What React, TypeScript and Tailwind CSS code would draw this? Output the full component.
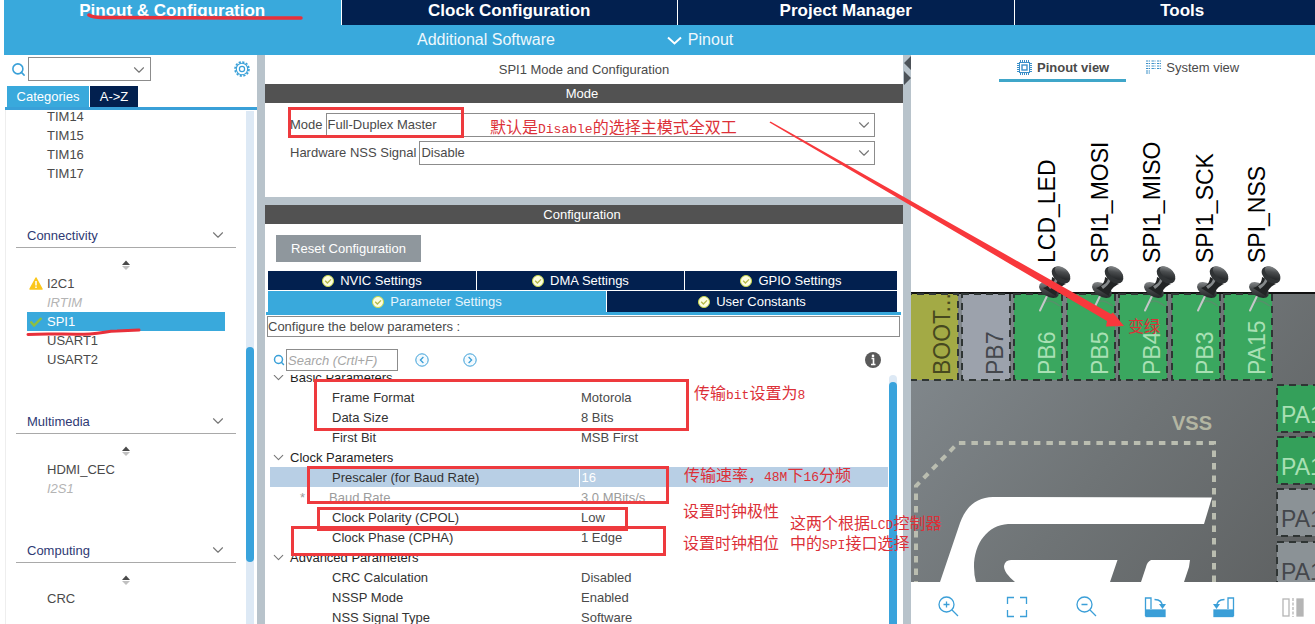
import { Fragment, ReactNode } from "react";
import clsx from "clsx";
import { ChevronDown, Search } from "lucide-react";

type Peripheral = {
  name: string;
  state?: "warning" | "active" | "disabled";
};

type Category = {
  name: string;
  items: Peripheral[];
};

const timers: Peripheral[] = [
  { name: "TIM14" },
  { name: "TIM15" },
  { name: "TIM16" },
  { name: "TIM17" },
];

const categories: Category[] = [
  {
    name: "Connectivity",
    items: [
      { name: "I2C1", state: "warning" },
      { name: "IRTIM", state: "disabled" },
      { name: "SPI1", state: "active" },
      { name: "USART1" },
      { name: "USART2" },
    ],
  },
  {
    name: "Multimedia",
    items: [{ name: "HDMI_CEC" }, { name: "I2S1", state: "disabled" }],
  },
  { name: "Computing", items: [{ name: "CRC" }] },
];

type Param = {
  name: string;
  value: string;
  state?: "selected" | "readonly";
};

const paramGroups: { name: string; params: Param[] }[] = [
  {
    name: "Basic Parameters",
    params: [
      { name: "Frame Format", value: "Motorola" },
      { name: "Data Size", value: "8 Bits" },
      { name: "First Bit", value: "MSB First" },
    ],
  },
  {
    name: "Clock Parameters",
    params: [
      { name: "Prescaler (for Baud Rate)", value: "16", state: "selected" },
      { name: "Baud Rate", value: "3.0 MBits/s", state: "readonly" },
      { name: "Clock Polarity (CPOL)", value: "Low" },
      { name: "Clock Phase (CPHA)", value: "1 Edge" },
    ],
  },
  {
    name: "Advanced Parameters",
    params: [
      { name: "CRC Calculation", value: "Disabled" },
      { name: "NSSP Mode", value: "Enabled" },
      { name: "NSS Signal Type", value: "Software" },
    ],
  },
];

function Header() {
  const tabs = ["Clock Configuration", "Project Manager", "Tools"];
  return (
    <header className="shrink-0 overflow-hidden pl-1">
      <nav className="grid w-[calc(100%+35px)] grid-cols-4 bg-[#39a9dc] text-[17px] leading-[21px] font-bold text-white">
        <button type="button" className="h-[25px] pb-1">
          Pinout &amp; Configuration
        </button>
        {tabs.map(tab => (
          <button
            key={tab}
            type="button"
            className="h-[25px] border-l border-white bg-[#02204f] pb-1"
          >
            {tab}
          </button>
        ))}
      </nav>
      <div className="flex h-[30px] items-center gap-[112px] bg-[#39a9dc] pl-[413px] text-base text-[#eef8fd]">
        <button type="button">Additional Software</button>
        <button type="button" className="flex items-center gap-1.5">
          <svg width="15" height="9" viewBox="0 0 15 9" fill="none">
            <path d="M1 1.5 7.5 7.5 14 1.5" stroke="white" strokeWidth="2" />
          </svg>
          Pinout
        </button>
      </div>
    </header>
  );
}

function PeripheralIcon({ state }: { state?: Peripheral["state"] }) {
  if (state === "warning") {
    return (
      <svg width="14" height="13" viewBox="0 0 14 13">
        <path
          d="M7 1 13 12H1Z"
          fill="#fbc71c"
          stroke="#fbc71c"
          strokeWidth="1.5"
          strokeLinejoin="round"
        />
        <path d="M7 4v4.5M7 9.5v1.6" stroke="white" strokeWidth="1.5" />
      </svg>
    );
  }
  if (state === "active") {
    return (
      <svg width="14" height="12" viewBox="0 0 14 12" fill="none">
        <path d="M1.5 5.5 5 9.5 12.5 2" stroke="#8fbf3f" strokeWidth="2.4" />
      </svg>
    );
  }
  return null;
}

function PeripheralList({ items }: { items: Peripheral[] }) {
  return (
    <ul className="mr-[21px] ml-[21px]">
      {items.map(item => (
        <li key={item.name}>
          <button
            type="button"
            className={clsx(
              "flex h-[19px] w-full items-center text-left",
              item.state === "active" && "bg-[#39a9dc] text-white",
              item.state === "disabled" && "text-[#b4b4b4] italic"
            )}
          >
            <span className="flex w-5 pl-0.5">
              <PeripheralIcon state={item.state} />
            </span>
            {item.name}
          </button>
        </li>
      ))}
    </ul>
  );
}

function Sidebar() {
  return (
    <aside className="flex w-[257px] shrink-0 flex-col">
      <div className="flex items-center pt-0.5 pr-[7px] pl-[11px]">
        <Search className="size-[15px] text-[#39a0d8]" strokeWidth={2.5} />
        <div className="relative ml-0.5 w-[123px]">
          <select
            aria-label="Search peripheral"
            className="block h-6 w-full appearance-none border border-[#8c8c8c] bg-white"
          />
          <ChevronDown className="pointer-events-none absolute top-1 right-[3px] size-[18px] text-[#777]" strokeWidth={1.5} />
        </div>
        <button type="button" aria-label="Settings" className="ml-auto">
          <svg width="16" height="16" viewBox="0 0 16 16" fill="none" stroke="#39a0d8">
            <circle cx="8" cy="8" r="7" strokeWidth="1.6" strokeDasharray="2.2 1.47" />
            <circle cx="8" cy="8" r="5.7" strokeWidth="1.1" />
            <circle cx="8" cy="8" r="2.6" strokeWidth="1.2" />
          </svg>
        </button>
      </div>
      <div className="mt-[5px] ml-[5px] flex gap-px border-b-[3px] border-[#39a0d8] pl-0.5 text-white">
        <button type="button" className="h-[21px] w-[82px] bg-[#39a9dc]">
          Categories
        </button>
        <button type="button" className="h-[21px] w-12 bg-[#02204f]">
          A-&gt;Z
        </button>
      </div>
      <div className="ml-[5px] flex min-h-0 flex-1 overflow-hidden border-l border-[#eeeeee]">
        <div className="-mt-[3px] min-w-0 flex-1">
          <PeripheralList items={timers} />
          {categories.map(category => (
            <section key={category.name} className="pt-10">
              <button
                type="button"
                className="mr-2.5 ml-2.5 flex h-[25px] w-[220px] items-center justify-between border-b border-[#a9a9a9] pr-[9px] pl-[11px] text-[#2f3a74]"
              >
                {category.name}
                <ChevronDown className="size-[18px] text-[#777]" strokeWidth={1.5} />
              </button>
              <div className="flex h-[26px] justify-center pt-3">
                <svg width="10" height="11" viewBox="0 0 10 11">
                  <path d="M5 0.5 9 5H1Z" fill="#4a4a4a" />
                  <path d="M5 10 9 6H1Z" fill="#c0c0c0" />
                </svg>
              </div>
              <PeripheralList items={category.items} />
            </section>
          ))}
        </div>
        <div className="mt-px mr-[3px] flex w-2 flex-col bg-[#dde9f5]">
          <div className="h-[46%]" />
          <div className="h-[42%] rounded-full bg-[#39a3dc]" />
        </div>
      </div>
    </aside>
  );
}

function TitleBar({ children }: { children: ReactNode }) {
  return (
    <div className="h-[19px] shrink-0 bg-[#525252] pr-1 text-center leading-[19px] text-white">
      {children}
    </div>
  );
}

function ModeField({ id, label, value }: { id: string; label: string; value: string }) {
  return (
    <div className="flex items-center gap-[3px]">
      <label htmlFor={id} className="pb-0.5">
        {label}
      </label>
      <div className="relative flex-1">
        <select
          id={id}
          defaultValue={value}
          className="block h-6 w-full appearance-none border border-[#8c8c8c] bg-white pb-0.5 pl-px"
        >
          <option>{value}</option>
        </select>
        <ChevronDown className="pointer-events-none absolute top-[3px] right-0.5 size-[18px] text-[#777]" strokeWidth={1.5} />
      </div>
    </div>
  );
}

function SettingsTab({ label, active }: { label: string; active?: boolean }) {
  return (
    <button
      type="button"
      className={clsx(
        "flex h-full items-center justify-center gap-1.5",
        active ? "bg-[#39a9dc] text-[#e6f5fc]" : "bg-[#02204f] text-white"
      )}
    >
      <svg width="12" height="12" viewBox="0 0 12 12" fill="none">
        <circle cx="6" cy="6" r="5.5" fill="#fdfde0" stroke="#c9d84a" />
        <path d="M3.2 5.8 5.4 8 9 4.4" stroke="#b3b848" strokeWidth="1.3" />
      </svg>
      {label}
    </button>
  );
}

function CircleArrow({ label, d }: { label: string; d: string }) {
  return (
    <button type="button" aria-label={label}>
      <svg width="14" height="14" viewBox="0 0 14 14" fill="none" stroke="#3b9fd8">
        <circle cx="7" cy="7" r="6.2" fill="#f3fafe" />
        <path d={d} strokeWidth="1.3" />
      </svg>
    </button>
  );
}

function ParameterTable() {
  return (
    <table className="-mt-2 w-full table-fixed border-collapse self-start">
      <tbody>
        {paramGroups.map(group => (
          <Fragment key={group.name}>
            <tr className="h-5 text-[#1f1f1f]">
              <th colSpan={2} className="p-0 text-left font-normal">
                <div className="flex items-center gap-[3px]">
                  <ChevronDown className="size-[17px] text-[#777]" strokeWidth={1.5} />
                  {group.name}
                </div>
              </th>
            </tr>
            {group.params.map(param => (
              <tr
                key={param.name}
                className={clsx(
                  "h-5",
                  param.state === "selected" && "bg-[#b8cfe5]",
                  param.state === "readonly" ? "text-[#9c9c9c]" : "text-[#333]"
                )}
              >
                <td className="w-1/2 p-0">
                  {param.state === "readonly" ? (
                    <div className="flex pl-[30px]">
                      <span className="w-[29px]">*</span>
                      {param.name}
                    </div>
                  ) : (
                    <div className="pl-[62px]">{param.name}</div>
                  )}
                </td>
                <td
                  className={clsx(
                    "py-0 pr-0",
                    param.state === "selected"
                      ? "border-l border-white pl-0.5 text-white"
                      : "pl-0.5",
                    !param.state && "text-[#4a4a4a]"
                  )}
                >
                  {param.value}
                </td>
              </tr>
            ))}
          </Fragment>
        ))}
      </tbody>
    </table>
  );
}

function ConfigurationPanel() {
  return (
    <main className="flex min-w-0 flex-[638] flex-col">
      <h1 className="h-[29px] shrink-0 text-center leading-[29px]">
        SPI1 Mode and Configuration
      </h1>
      <TitleBar>Mode</TitleBar>
      <div className="flex h-[94px] shrink-0 flex-col gap-1 pt-[10px] pr-7 pl-[25px]">
        <ModeField id="mode" label="Mode" value="Full-Duplex Master" />
        <ModeField id="nss" label="Hardware NSS Signal" value="Disable" />
      </div>
      <div className="h-2 shrink-0 bg-[#b8c3cb]" />
      <TitleBar>Configuration</TitleBar>
      <div className="px-[11px] pt-[11px]">
        <button type="button" className="h-[27px] w-[145px] bg-[#8f979d] text-white">
          Reset Configuration
        </button>
      </div>
      <div className="mt-[9px] flex flex-col gap-px pr-1.5 pl-[3px]">
        <div className="grid h-[19px] grid-cols-[208fr_207fr_212fr] gap-px">
          <SettingsTab label="NVIC Settings" />
          <SettingsTab label="DMA Settings" />
          <SettingsTab label="GPIO Settings" />
        </div>
        <div className="grid h-[21px] grid-cols-[338fr_290fr] gap-px">
          <SettingsTab label="Parameter Settings" active />
          <SettingsTab label="User Constants" />
        </div>
      </div>
      <div className="mr-0.5 ml-px h-[3px] shrink-0 bg-[#39a9dc]" />
      <div className="mt-px mr-[3px] ml-0.5 h-[21px] shrink-0 border border-[#8c8c8c] leading-[19px]">
        Configure the below parameters :
      </div>
      <div className="mt-3 flex h-[22px] shrink-0 items-center pr-[22px] pl-2">
        <Search className="size-3 text-[#39a0d8]" strokeWidth={3} />
        <input
          type="text"
          aria-label="Search parameters"
          placeholder="Search (Crtl+F)"
          className="ml-px h-[22px] w-28 border border-[#8c8c8c] px-px italic placeholder:text-[#a6a6a6]"
        />
        <div className="ml-[17px] flex gap-[34px]">
          <CircleArrow label="Previous match" d="M8.4 4 5.4 7l3 3" />
          <CircleArrow label="Next match" d="M5.6 4l3 3-3 3" />
        </div>
        <button type="button" aria-label="Information" className="ml-auto">
          <svg width="16" height="16" viewBox="0 0 16 16">
            <circle cx="8" cy="8" r="8" fill="#5a5a5a" />
            <path d="M6.5 6.5H8.5V12.500M6 12.5h4.500" stroke="white" strokeWidth="1.6" fill="none" />
            <circle cx="8" cy="3.9" r="1.3" fill="white" />
          </svg>
        </button>
      </div>
      <div className="mt-1 mr-1.5 ml-[5px] flex min-h-0 flex-1 overflow-hidden">
        <div className="min-w-0 flex-1">
          <ParameterTable />
        </div>
        <div className="ml-px flex w-2 flex-col rounded-t-full bg-[#dde9f5] pt-[7px]">
          <div className="flex-1 rounded-t-full bg-[#39a3dc]" />
        </div>
      </div>
    </main>
  );
}

const topPins = [
  { x: 905, label: "BOOT...", fill: "#a3aa45", text: "#46481f" },
  { x: 962, label: "PB7", fill: "#9ca2ac", text: "#44474c" },
  { x: 1014, label: "PB6", fill: "#3aa75f", text: "#a9e0b4", signal: "LCD_LED" },
  { x: 1067, label: "PB5", fill: "#3aa75f", text: "#a9e0b4", signal: "SPI1_MOSI" },
  { x: 1119, label: "PB4", fill: "#3aa75f", text: "#a9e0b4", signal: "SPI1_MISO" },
  { x: 1172, label: "PB3", fill: "#3aa75f", text: "#a9e0b4", signal: "SPI1_SCK" },
  { x: 1224, label: "PA15", fill: "#3aa75f", text: "#a9e0b4", signal: "SPI_NSS" },
];

const sidePins = [
  { y: 385, fill: "#34a05a", text: "#a9e0b4" },
  { y: 437, fill: "#34a05a", text: "#a9e0b4" },
  { y: 489, fill: "#8b9296", text: "#44474c" },
  { y: 542, fill: "#8b9296", text: "#44474c" },
];

function PushPin({ x }: { x: number }) {
  return (
    <g transform={`translate(${x} 0)`}>
      <path d="M29 304 C34 298 40 302 46 306" stroke="#777" strokeWidth="1.5" fill="none" opacity="0.45" />
      <path d="M33 296 26 310.500" stroke="#c4c7c9" strokeWidth="2" strokeLinecap="round" />
      <ellipse cx="35" cy="290" rx="11" ry="6.500" transform="rotate(32 35 290)" fill="url(#pin)" />
      <path d="M29 288C35 286 38 282 38 277L52 284C47 286 43 290 42 296Z" fill="#222425" />
      <path d="M34 286C39 284 41 281 41 278L44 280C42 284 39 287 36 289Z" fill="#85898b" />
      <ellipse cx="47" cy="275" rx="10.500" ry="7" transform="rotate(38 47 275)" fill="#303335" />
      <ellipse cx="48.500" cy="273" rx="9" ry="5" transform="rotate(38 48.500 273)" fill="url(#pin)" />
    </g>
  );
}

function ChipView() {
  return (
    <svg
      className="min-h-0 w-full flex-1"
      viewBox="911 82 404 500"
      preserveAspectRatio="xMinYMin slice"
      fontFamily="'Liberation Sans', Arial, sans-serif"
      fontSize="23"
    >
      <defs>
        <linearGradient id="chip" x1="0" y1="0" x2="1" y2="0.600">
          <stop offset="0" stopColor="#858c91" />
          <stop offset="0.550" stopColor="#6f7476" />
          <stop offset="1" stopColor="#5f6263" />
        </linearGradient>
        <linearGradient id="pin" x1="0" y1="0" x2="1" y2="1">
          <stop offset="0" stopColor="#a3a6a8" />
          <stop offset="0.450" stopColor="#4a4d4f" />
          <stop offset="1" stopColor="#16181a" />
        </linearGradient>
      </defs>
      <rect x="900" y="293" width="460" height="340" fill="url(#chip)" />
      <path d="M900 293H1360" stroke="#111" strokeWidth="2" />
      {topPins.map(pin => (
        <g key={pin.label}>
          <rect
            x={pin.x}
            y="294"
            width={pin.signal || pin.label === "PB7" ? 48 : 53}
            height="86"
            fill={pin.fill}
            stroke="#2f3534"
            strokeWidth="2"
            strokeDasharray="7 5"
          />
          <text transform={`translate(${pin.label === "BOOT..." ? 950 : pin.x + 41} 375) rotate(-90)`} fill={pin.text}>
            {pin.label}
          </text>
          {pin.signal && (
            <text transform={`translate(${pin.x + 41} 263) rotate(-90)`} fill="#000">
              {pin.signal}
            </text>
          )}
        </g>
      ))}
      {topPins.map(pin => pin.signal && <PushPin key={pin.signal} x={pin.x} />)}
      {sidePins.map(pin => (
        <g key={pin.y}>
          <rect
            x="1277"
            y={pin.y}
            width="90"
            height="47"
            fill={pin.fill}
            stroke="#2f3534"
            strokeWidth="2"
            strokeDasharray="7 5"
          />
          <text x="1281" y={pin.y + 38} fill={pin.text}>
            PA1
          </text>
        </g>
      ))}
      <text x="1172" y="430" fontSize="20" fontWeight="bold" fill="#b3b5a2">
        VSS
      </text>
      <path
        d="M916 600V486L958 443H1214V600"
        fill="none"
        stroke="#babdb0"
        strokeWidth="4"
        strokeDasharray="6.500 6"
      />
      <g fill="white">
        <path d="M1212 497.500 1204 524H1008C988 525 974 543 974 567Q974 575 976 582L980 600H934L940 582 960 523C966 506 977 497.500 993 497Z" />
        <path d="M1117.500 560 1110 582 1104 600H1030L1015 582C1008 576 1004 571 1004 566Q1005 560 1011 560Z" />
        <path d="M1151 560H1190L1189 567 1184 582 1178 600H1135L1141 582 1146 567Q1147 562 1151 560Z" />
      </g>
    </svg>
  );
}

function ToolButton({ label, children }: { label: string; children: ReactNode }) {
  return (
    <button type="button" aria-label={label}>
      <svg width="22" height="22" viewBox="0 0 22 22" fill="none" stroke="#3b9fd8" strokeWidth="1.3">
        {children}
      </svg>
    </button>
  );
}

function PinoutPanel() {
  return (
    <section className="flex min-w-0 flex-[404] flex-col overflow-hidden">
      <div className="flex h-[27px] shrink-0 gap-5 pl-[88px]">
        <button
          type="button"
          className="flex items-center gap-[5px] border-b-[3px] border-[#3fa6c9] pr-[17px] pl-[18px] font-bold"
        >
          <svg width="15" height="15" viewBox="0 0 15 15" fill="none" stroke="#3b8fc8">
            <rect x="2.500" y="2.500" width="10" height="10" />
            <rect x="5" y="5" width="5" height="5" strokeWidth="1.4" />
            <path
              d="M3.500 0v2M5.500 0v2M7.500 0v2M9.500 0v2M11.500 0v2M3.500 13v2M5.500 13v2M7.500 13v2M9.500 13v2M11.500 13v2M0 3.500h2M0 5.500h2M0 7.500h2M0 9.500h2M0 11.500h2M13 3.500h2M13 5.500h2M13 7.500h2M13 9.500h2M13 11.500h2"
            />
          </svg>
          Pinout view
        </button>
        <button type="button" className="flex items-center gap-[5px] border-b-[3px] border-transparent">
          <svg width="15" height="14" viewBox="0 0 15 14" stroke="#3b8fc8" strokeWidth="1.2">
            <path
              d="M0 1h4M0 3.500h4M0 6h4M0 8.500h4M0 11h4M0 13h4M5.500 1h4M5.500 3.500h4M5.500 6h4M5.500 8.500h4M11 1h4M11 3.500h4M11 6h4M11 8.500h4"
              strokeDasharray="2.400 0.600"
            />
          </svg>
          System view
        </button>
      </div>
      <ChipView />
      <div className="flex h-[42px] shrink-0 items-center justify-between bg-white pt-2 pr-[11px] pl-[26px]">
        <ToolButton label="Zoom in">
          <circle cx="9.500" cy="8.500" r="7.500" />
          <path d="M15 14l6 6M6.500 8.500h6M9.500 5.500v6" />
        </ToolButton>
        <ToolButton label="Best fit">
          <path d="M1.500 8V1.500H8M14 1.500h6.500V8M20.500 14v6.500H14M8 20.500H1.500V14" />
        </ToolButton>
        <ToolButton label="Zoom out">
          <circle cx="9.500" cy="8.500" r="7.500" />
          <path d="M15 14l6 6M6.500 8.500h6" />
        </ToolButton>
        <ToolButton label="Rotate clockwise">
          <path d="M1.500 13V2H7v11M1.500 13v7" />
          <path d="M10.500 3.500C16 3.500 18.500 6 18.500 11" />
          <path d="M15 8h7l-3.500 5Z" fill="#3b9fd8" stroke="none" />
          <rect x="2" y="14" width="19" height="6.500" fill="#3b9fd8" />
        </ToolButton>
        <ToolButton label="Rotate counterclockwise">
          <path d="M20.500 13V2H15v11M20.500 13v7" />
          <path d="M11.500 3.500C6 3.500 3.500 6 3.500 11" />
          <path d="M0 8h7l-3.500 5Z" fill="#3b9fd8" stroke="none" />
          <rect x="1" y="14" width="19" height="6.500" fill="#3b9fd8" />
        </ToolButton>
        <ToolButton label="Flip horizontally">
          <g stroke="#b5b5b5">
            <rect x="1" y="3" width="6" height="17" />
            <path d="M11 2v19" strokeDasharray="3 1.500" />
            <rect x="15" y="3" width="6" height="17" fill="#b5b5b5" />
          </g>
        </ToolButton>
      </div>
    </section>
  );
}

const notes = [
  { x: 490, y: 133, parts: ["默认是", "Disable", "的选择主模式全双工"] },
  { x: 694, y: 399, parts: ["传输", "bit", "设置为", "8"] },
  { x: 684, y: 481, parts: ["传输速率，", "48M", "下", "16", "分频"] },
  { x: 683, y: 517, parts: ["设置时钟极性"] },
  { x: 683, y: 549, parts: ["设置时钟相位"] },
  { x: 790, y: 529, parts: ["这两个根据", "LCD", "控制器"] },
  { x: 790, y: 549, parts: ["中的", "SPI", "接口选择"] },
  { x: 1128, y: 332, parts: ["变绿"] },
];

// Hand-drawn marks laid over the whole window.
function Annotations() {
  return (
    <svg className="pointer-events-none absolute inset-0 h-full w-full" fill="none">
      <g stroke="#ee3a3e" strokeWidth="3">
        <rect x="289.500" y="108.500" width="173" height="28" />
        <rect x="315.500" y="380.500" width="372" height="49" />
        <rect x="308.500" y="467.500" width="359" height="35" />
        <rect x="318.500" y="508.500" width="308" height="21" />
        <rect x="292.500" y="527.500" width="372" height="27" />
      </g>
      <g stroke="#e8303a" strokeWidth="3" strokeLinecap="round">
        <path d="M89 15Q93 17.500 102 17.500L301 18" strokeWidth="3.500" />
        <path d="M28 334.500C50 333 70 335 90 334C105 333 106 331 117 331L139 330" />
      </g>
      <path d="M769.500 122.500 770.500 121.500 1111 314 1113 312.500 1124 326 1106 326.500 1107 321Z" fill="#f8383c" />
      <g
        fill="#dc3038"
        fontSize="16"
        fontFamily="'Liberation Mono', 'Noto Sans CJK SC', monospace"
      >
        {notes.map(note => (
          <text key={note.parts.join("")} x={note.x} y={note.y}>
            {note.parts.map((part, i) => (
              <tspan key={i} fontSize={i % 2 ? 13 : 16}>
                {part}
              </tspan>
            ))}
          </text>
        ))}
      </g>
    </svg>
  );
}

export default function App() {
  return (
    <div className="relative flex h-screen flex-col overflow-hidden bg-white font-['Liberation_Sans',Arial,sans-serif] text-[13px] leading-[19px] text-[#4a4a4a]">
      <Header />
      <div className="flex min-h-0 flex-1">
        <Sidebar />
        <div className="w-2 shrink-0 bg-[#b8c3cb]" />
        <ConfigurationPanel />
        <div className="w-2 shrink-0 bg-[#b8c3cb]">
          <svg width="8" height="31" viewBox="0 0 8 31" fill="#4c5258">
            <path d="M8 1v14L1 8ZM1 16v14l7-7Z" />
          </svg>
        </div>
        <PinoutPanel />
      </div>
      <Annotations />
    </div>
  );
}
